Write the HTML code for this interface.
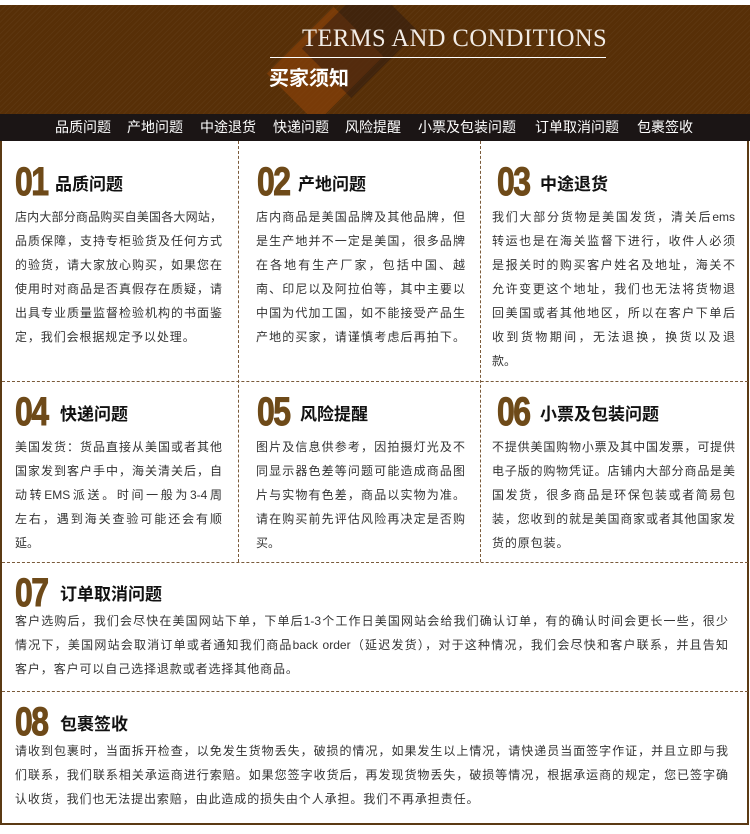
<!DOCTYPE html>
<html><head><meta charset="utf-8"><style>
*{margin:0;padding:0;box-sizing:border-box}
body{width:750px;height:834px;background:#fff;position:relative;overflow:hidden;font-family:"Liberation Sans","Noto Sans CJK SC",sans-serif;color:#333}
.hdr{position:absolute;left:0;top:5px;width:750px;height:109px;background:#572f07;background-image:repeating-linear-gradient(135deg,rgba(255,255,255,0.03) 0 1px,transparent 1px 4px);overflow:hidden}
.dm{position:absolute;width:70px;height:70px;transform:rotate(45deg) scaleY(1.35)}
.nav{position:absolute;left:0;top:114px;width:750px;height:27px;background:#1b1515;color:#fff;font-size:14px;line-height:27px;white-space:nowrap}
.nav span{position:absolute;top:0}
.box{position:absolute;left:0;top:141px;width:749px;height:684px;border:2px solid #5b3a14;border-top:none}
.vl{position:absolute;width:0;border-left:1px dashed #7a5a3a}
.hl{position:absolute;height:0;border-top:1px dashed #7a5a3a}
.num{position:absolute;font-weight:bold;font-size:40px;color:#6e4a19;transform:scaleX(.8);transform-origin:0 0;line-height:38px;letter-spacing:-2px;-webkit-text-stroke:1px #6e4a19}
.tt{position:absolute;font-weight:bold;font-size:17px;color:#111;line-height:20px}
.tx{position:absolute;font-size:12px;line-height:24px;color:#333}
.tx div{white-space:nowrap;text-align:justify;text-align-last:justify;overflow:visible}
.tx div.l{text-align-last:left}
</style></head><body>
<div class="hdr">
 <div class="dm" style="left:290px;top:25px;background:rgba(150,70,10,0.55)"></div>
 <div class="dm" style="left:325px;top:0px;background:rgba(40,25,20,0.45)"></div>
 <div style="position:absolute;left:302px;top:20px;font-family:'Liberation Serif',serif;font-size:25px;color:#f2ece6;letter-spacing:0.5px;transform:scaleX(0.98);transform-origin:0 0;white-space:nowrap">TERMS AND CONDITIONS</div>
 <div style="position:absolute;left:270px;top:52px;width:336px;height:1px;background:#fff"></div>
 <div style="position:absolute;left:269px;top:57px;font-size:20px;font-weight:bold;color:#fff">买家须知</div>
</div>
<div class="nav">
 <span style="left:55px">品质问题</span><span style="left:127px">产地问题</span><span style="left:200px">中途退货</span><span style="left:273px">快递问题</span><span style="left:345px">风险提醒</span><span style="left:418px">小票及包装问题</span><span style="left:535px">订单取消问题</span><span style="left:637px">包裹签收</span>
</div>
<div class="box"></div>
<div class="vl" style="left:238px;top:141px;height:421px"></div>
<div class="vl" style="left:480px;top:141px;height:421px"></div>
<div class="hl" style="left:2px;top:381px;width:746px"></div>
<div class="hl" style="left:2px;top:562px;width:746px"></div>
<div class="hl" style="left:2px;top:691px;width:746px"></div>

<div class="num" style="left:15px;top:163px">01</div><div class="tt" style="left:55px;top:175px">品质问题</div>
<div class="tx" style="left:15px;top:205px;width:207px"><div>店内大部分商品购买自美国各大网站，</div><div>品质保障，支持专柜验货及任何方式</div><div>的验货，请大家放心购买，如果您在</div><div>使用时对商品是否真假存在质疑，请</div><div>出具专业质量监督检验机构的书面鉴</div><div class="l" style="letter-spacing:0.9px">定，我们会根据规定予以处理。</div></div>

<div class="num" style="left:257px;top:163px">02</div><div class="tt" style="left:298px;top:175px">产地问题</div>
<div class="tx" style="left:256px;top:205px;width:209px"><div>店内商品是美国品牌及其他品牌，但</div><div>是生产地并不一定是美国，很多品牌</div><div>在各地有生产厂家，包括中国、越</div><div>南、印尼以及阿拉伯等，其中主要以</div><div>中国为代加工国，如不能接受产品生</div><div>产地的买家，请谨慎考虑后再拍下。</div></div>

<div class="num" style="left:497px;top:163px">03</div><div class="tt" style="left:540px;top:175px">中途退货</div>
<div class="tx" style="left:492px;top:205px;width:243px"><div>我们大部分货物是美国发货，清关后ems</div><div>转运也是在海关监督下进行，收件人必须</div><div>是报关时的购买客户姓名及地址，海关不</div><div>允许变更这个地址，我们也无法将货物退</div><div>回美国或者其他地区，所以在客户下单后</div><div>收到货物期间，无法退换，换货以及退</div><div class="l">款。</div></div>

<div class="num" style="left:15px;top:393px">04</div><div class="tt" style="left:60px;top:405px">快递问题</div>
<div class="tx" style="left:15px;top:435px;width:207px"><div>美国发货：货品直接从美国或者其他</div><div>国家发到客户手中，海关清关后，自</div><div>动转EMS派送。时间一般为3-4周</div><div>左右，遇到海关查验可能还会有顺</div><div class="l">延。</div></div>

<div class="num" style="left:257px;top:393px">05</div><div class="tt" style="left:300px;top:405px">风险提醒</div>
<div class="tx" style="left:256px;top:435px;width:209px"><div>图片及信息供参考，因拍摄灯光及不</div><div>同显示器色差等问题可能造成商品图</div><div>片与实物有色差，商品以实物为准。</div><div>请在购买前先评估风险再决定是否购</div><div class="l">买。</div></div>

<div class="num" style="left:497px;top:393px">06</div><div class="tt" style="left:540px;top:405px">小票及包装问题</div>
<div class="tx" style="left:492px;top:435px;width:243px"><div>不提供美国购物小票及其中国发票，可提供</div><div>电子版的购物凭证。店铺内大部分商品是美</div><div>国发货，很多商品是环保包装或者简易包</div><div>装，您收到的就是美国商家或者其他国家发</div><div class="l" style="letter-spacing:0.9px">货的原包装。</div></div>

<div class="num" style="left:15px;top:574px">07</div><div class="tt" style="left:60px;top:585px">订单取消问题</div>
<div class="tx" style="left:15px;top:609px;width:713px"><div>客户选购后，我们会尽快在美国网站下单，下单后1-3个工作日美国网站会给我们确认订单，有的确认时间会更长一些，很少</div><div>情况下，美国网站会取消订单或者通知我们商品back order（延迟发货），对于这种情况，我们会尽快和客户联系，并且告知</div><div class="l" style="letter-spacing:0.9px">客户，客户可以自己选择退款或者选择其他商品。</div></div>

<div class="num" style="left:15px;top:703px">08</div><div class="tt" style="left:60px;top:715px">包裹签收</div>
<div class="tx" style="left:15px;top:739px;width:713px"><div>请收到包裹时，当面拆开检查，以免发生货物丢失，破损的情况，如果发生以上情况，请快递员当面签字作证，并且立即与我</div><div>们联系，我们联系相关承运商进行索赔。如果您签字收货后，再发现货物丢失，破损等情况，根据承运商的规定，您已签字确</div><div class="l" style="letter-spacing:0.9px">认收货，我们也无法提出索赔，由此造成的损失由个人承担。我们不再承担责任。</div></div>
</body></html>
